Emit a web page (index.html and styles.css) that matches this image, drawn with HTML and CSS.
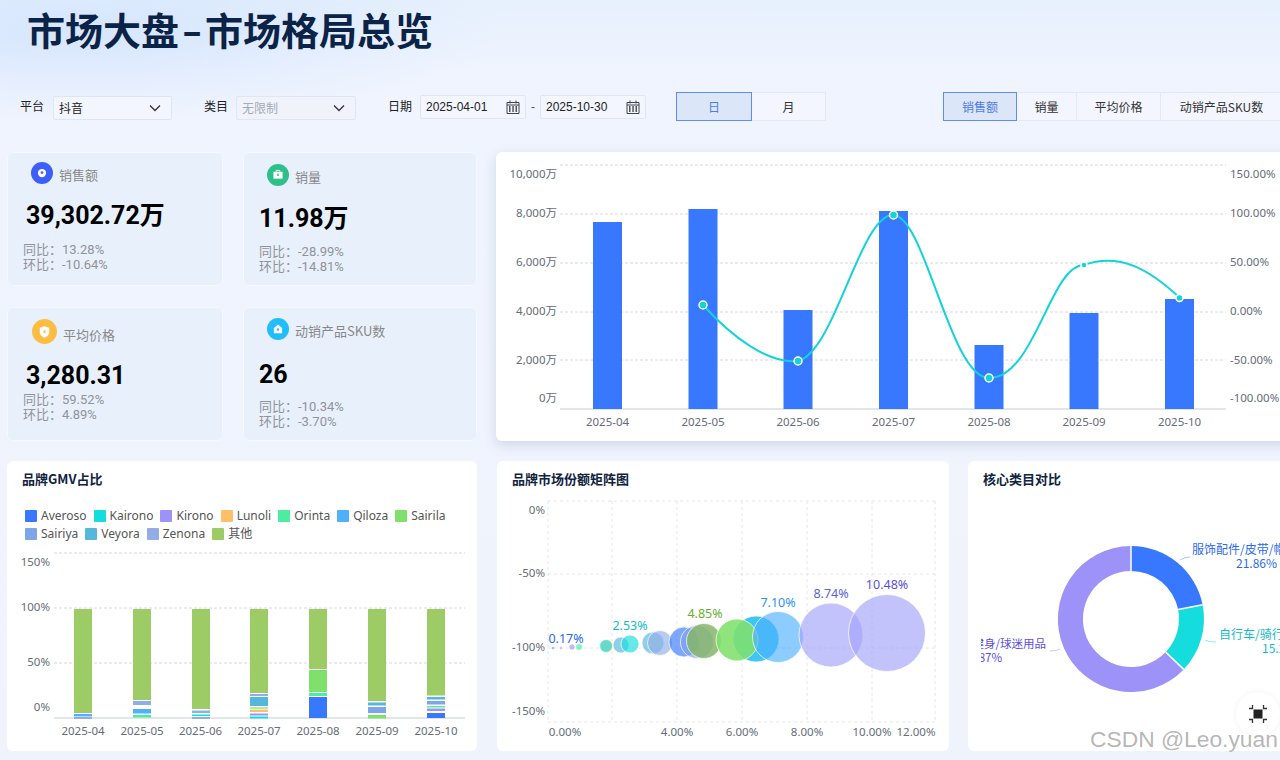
FILE: index.html
```html
<!DOCTYPE html>
<html lang="zh-CN">
<head>
  <meta charset="UTF-8">
  <title>市场大盘-市场格局总览</title>
  <link rel="stylesheet" href="styles.css">
</head>
<body>
  <div class="page">
    <h1 class="page-title">市场大盘<span class="title-dash">-</span>市场格局总览</h1>

    <!-- Filters -->
    <div class="filters">
      <span class="filter-label">平台</span>
      <div class="select">抖音
        <svg class="chevron" viewBox="0 0 12 8"><path d="M1 1.500 6 6.500 11 1.500"/></svg>
      </div>
      <span class="filter-label filter-gap">类目</span>
      <div class="select select-disabled">无限制
        <svg class="chevron" viewBox="0 0 12 8"><path d="M1 1.500 6 6.500 11 1.500"/></svg>
      </div>
      <span class="filter-label filter-gap">日期</span>
      <div class="date-input">2025-04-01
        <svg class="calendar" viewBox="0 0 14 14"><path d="M1 2.500h12v11H1zM1 5h12M4 .5v3M10 .5v3"/><path class="calendar-dots" d="M3 7h1.500M6.300 7h1.500M9.500 7h1.500M3 9h1.500M6.300 9h1.500M9.500 9h1.500M3 11h1.500M6.300 11h1.500M9.500 11h1.500"/></svg>
      </div>
      <span class="date-dash">-</span>
      <div class="date-input">2025-10-30
        <svg class="calendar" viewBox="0 0 14 14"><path d="M1 2.500h12v11H1zM1 5h12M4 .5v3M10 .5v3"/><path class="calendar-dots" d="M3 7h1.500M6.300 7h1.500M9.500 7h1.500M3 9h1.500M6.300 9h1.500M9.500 9h1.500M3 11h1.500M6.300 11h1.500M9.500 11h1.500"/></svg>
      </div>
      <div class="seg seg-period">
        <span class="seg-item active seg-day">日</span>
        <span class="seg-item seg-month">月</span>
      </div>
      <div class="seg seg-metric">
        <span class="seg-item active seg-sales">销售额</span>
        <span class="seg-item seg-volume">销量</span>
        <span class="seg-item seg-price">平均价格</span>
        <span class="seg-item seg-sku">动销产品SKU数</span>
      </div>
    </div>

    <!-- KPI cards and main chart -->
    <div class="top-row">
      <div class="kpi-grid">
        <div class="kpi kpi-sales">
          <div class="kpi-head">
            <svg class="kpi-icon" viewBox="0 0 24 24"><circle cx="12" cy="12" r="12" fill="#3d5efb"/><circle cx="12" cy="12" r="4.500" fill="#fff"/><circle cx="12" cy="11.500" r="1.500" fill="#3d5efb"/></svg>
            <span class="kpi-name">销售额</span>
          </div>
          <div class="kpi-value">39,302.72万</div>
          <div class="kpi-sub">同比：13.28%</div>
          <div class="kpi-sub">环比：-10.64%</div>
        </div>
        <div class="kpi kpi-volume">
          <div class="kpi-head">
            <svg class="kpi-icon" viewBox="0 0 24 24"><circle cx="12" cy="12" r="12" fill="#2fbf8a"/><path d="M7 8.500h10v7.500H7z" fill="#fff"/><path d="M10 8.500V7h4v1.500" fill="none" stroke="#fff"/><rect x="11.200" y="10.500" width="1.600" height="2.500" fill="#2fbf8a"/></svg>
            <span class="kpi-name">销量</span>
          </div>
          <div class="kpi-value">11.98万</div>
          <div class="kpi-sub">同比：-28.99%</div>
          <div class="kpi-sub">环比：-14.81%</div>
        </div>
        <div class="kpi kpi-price">
          <div class="kpi-head">
            <svg class="kpi-icon" viewBox="0 0 24 24"><circle cx="12" cy="12" r="12" fill="#fdbd42"/><path d="M7.500 8.500 12 7l4.500 1.500V13c0 2.500-2.200 4-4.500 5-2.300-1-4.500-2.500-4.500-5z" fill="#fff"/><path d="M10.500 12.500h3M12.500 10.500l-1 3" stroke="#fdbd42" fill="none"/></svg>
            <span class="kpi-name">平均价格</span>
          </div>
          <div class="kpi-value">3,280.31</div>
          <div class="kpi-sub">同比：59.52%</div>
          <div class="kpi-sub">环比：4.89%</div>
        </div>
        <div class="kpi kpi-sku">
          <div class="kpi-head">
            <svg class="kpi-icon" viewBox="0 0 24 24"><circle cx="12" cy="12" r="12" fill="#22bdfb"/><path d="M7.500 11 12 7l4.500 4v5.500h-9z" fill="#fff"/><circle cx="12" cy="12.500" r="1.300" fill="#22bdfb"/></svg>
            <span class="kpi-name">动销产品SKU数</span>
          </div>
          <div class="kpi-value">26</div>
          <div class="kpi-sub">同比：-10.34%</div>
          <div class="kpi-sub">环比：-3.70%</div>
        </div>
      </div>

      <div class="card card-main">
        <svg class="chart" width="820" height="289" viewBox="496 152 820 289">
          <g class="grid">
            <path d="M560 165H1226M560 214H1226M560 263H1226M560 312H1226M560 360H1226"/>
          </g>
          <path class="axis" d="M560 409H1226"/>
          <g class="bar-main">
            <rect x="593" y="222" width="29" height="187"/>
            <rect x="688.500" y="209" width="29" height="200"/>
            <rect x="783.500" y="310" width="29" height="99"/>
            <rect x="879" y="211" width="29" height="198"/>
            <rect x="974.500" y="345" width="29" height="64"/>
            <rect x="1069.500" y="313" width="29" height="96"/>
            <rect x="1165" y="299" width="29" height="110"/>
          </g>
          <path class="trend" d="M703 305C732 337 768 364 798 361C835 352 860 215 893 215C925 215 950 378 989 378C1035 378 1050 265 1084 265C1120 252 1150 270 1180 298"/>
          <g class="trend-dot">
            <circle cx="703" cy="305" r="4"/>
            <circle cx="798" cy="361" r="4"/>
            <circle cx="893.500" cy="215" r="4"/>
            <circle cx="989" cy="378" r="4"/>
            <circle cx="1084" cy="265" r="3"/>
            <circle cx="1179.500" cy="298" r="3.500"/>
          </g>
          <g class="tick tick-end">
            <text x="557" y="178">10,000万</text>
            <text x="557" y="217">8,000万</text>
            <text x="557" y="266">6,000万</text>
            <text x="557" y="315">4,000万</text>
            <text x="557" y="364">2,000万</text>
            <text x="557" y="402">0万</text>
          </g>
          <g class="tick">
            <text x="1230" y="178">150.00%</text>
            <text x="1230" y="217">100.00%</text>
            <text x="1230" y="266">50.00%</text>
            <text x="1230" y="315">0.00%</text>
            <text x="1230" y="364">-50.00%</text>
            <text x="1230" y="402">-100.00%</text>
          </g>
          <g class="tick tick-mid">
            <text x="607.500" y="426">2025-04</text>
            <text x="703" y="426">2025-05</text>
            <text x="798" y="426">2025-06</text>
            <text x="893.500" y="426">2025-07</text>
            <text x="989" y="426">2025-08</text>
            <text x="1084" y="426">2025-09</text>
            <text x="1179.500" y="426">2025-10</text>
          </g>
        </svg>
      </div>
    </div>

    <!-- Bottom charts -->
    <div class="bottom-row">
      <div class="card card-share">
        <h2 class="card-title">品牌GMV占比</h2>
        <div class="legend">
          <span class="legend-item"><i class="swatch c-averoso"></i>Averoso</span>
          <span class="legend-item"><i class="swatch c-kairono"></i>Kairono</span>
          <span class="legend-item"><i class="swatch c-kirono"></i>Kirono</span>
          <span class="legend-item"><i class="swatch c-lunoli"></i>Lunoli</span>
          <span class="legend-item"><i class="swatch c-orinta"></i>Orinta</span>
          <span class="legend-item"><i class="swatch c-qiloza"></i>Qiloza</span>
          <span class="legend-item"><i class="swatch c-sairila"></i>Sairila</span>
          <span class="legend-item"><i class="swatch c-sairiya"></i>Sairiya</span>
          <span class="legend-item"><i class="swatch c-veyora"></i>Veyora</span>
          <span class="legend-item"><i class="swatch c-zenona"></i>Zenona</span>
          <span class="legend-item"><i class="swatch c-other"></i>其他</span>
        </div>
        <svg class="chart" width="470" height="208" viewBox="7 543 470 208">
          <g class="grid"><path d="M54 553H465M54 608H465M54 663H465"/></g>
          <path class="axis" d="M54 718H465"/>
          <g class="stack">
            <rect class="f-other" x="74" y="609" width="18" height="104"/>
            <rect class="f-qiloza" x="74" y="714" width="18" height="2"/>
            <rect class="f-zenona" x="74" y="716.500" width="18" height="2.500"/>

            <rect class="f-other" x="133" y="609" width="18" height="91"/>
            <rect class="f-zenona" x="133" y="701" width="18" height="4"/>
            <rect class="f-qiloza" x="133" y="709" width="18" height="4.500"/>
            <rect class="f-orinta" x="133" y="715" width="18" height="2.500"/>

            <rect class="f-other" x="192" y="609" width="18" height="100"/>
            <rect class="f-zenona" x="192" y="710.500" width="18" height="2.500"/>
            <rect class="f-kairono" x="192" y="714.500" width="18" height="1.500"/>
            <rect class="f-zenona" x="192" y="717" width="18" height="2"/>

            <rect class="f-other" x="250" y="609" width="18" height="84"/>
            <rect class="f-zenona" x="250" y="694" width="18" height="2"/>
            <rect class="f-veyora" x="250" y="697" width="18" height="9"/>
            <rect class="f-lime" x="250" y="707" width="18" height="2.500"/>
            <rect class="f-lunoli" x="250" y="710" width="18" height="2"/>
            <rect class="f-kirono" x="250" y="713.500" width="18" height="2"/>
            <rect class="f-kairono" x="250" y="716.500" width="18" height="2"/>

            <rect class="f-other" x="309" y="609" width="18" height="60"/>
            <rect class="f-sairila" x="309" y="670" width="18" height="22"/>
            <rect class="f-orinta" x="309" y="693" width="18" height="3"/>
            <rect class="f-averoso" x="309" y="697" width="18" height="21"/>

            <rect class="f-other" x="368" y="609" width="18" height="92"/>
            <rect class="f-veyora" x="368" y="702.500" width="18" height="3"/>
            <rect class="f-sairiya" x="368" y="707" width="18" height="6"/>
            <rect class="f-sairila" x="368" y="715" width="18" height="3.500"/>

            <rect class="f-other" x="427" y="609" width="18" height="86.500"/>
            <rect class="f-veyora" x="427" y="697" width="18" height="2.500"/>
            <rect class="f-sairiya" x="427" y="701" width="18" height="3.500"/>
            <rect class="f-orinta" x="427" y="706" width="18" height="1.500"/>
            <rect class="f-kirono" x="427" y="708.500" width="18" height="2.500"/>
            <rect class="f-averoso" x="427" y="713" width="18" height="5"/>
          </g>
          <g class="tick tick-end">
            <text x="50" y="566">150%</text>
            <text x="50" y="611">100%</text>
            <text x="50" y="666">50%</text>
            <text x="50" y="711">0%</text>
          </g>
          <g class="tick tick-mid">
            <text x="83" y="735">2025-04</text>
            <text x="142" y="735">2025-05</text>
            <text x="200.500" y="735">2025-06</text>
            <text x="259" y="735">2025-07</text>
            <text x="318" y="735">2025-08</text>
            <text x="377" y="735">2025-09</text>
            <text x="436" y="735">2025-10</text>
          </g>
        </svg>
      </div>

      <div class="card card-matrix">
        <h2 class="card-title">品牌市场份额矩阵图</h2>
        <svg class="chart" width="452" height="256" viewBox="497 495 452 256">
          <g class="grid grid-light">
            <path d="M548 501H935M548 574H935M548 648H935M548 722H935"/>
            <path d="M548 501V722M612 501V722M677 501V722M742 501V722M807 501V722M872 501V722M935 501V722"/>
          </g>
          <g class="bubbles">
            <circle class="f-averoso" cx="553" cy="648" r="1.500"/>
            <circle class="f-kirono" cx="561" cy="648" r="1.500"/>
            <circle class="f-kirono" cx="572" cy="647" r="3"/>
            <circle class="f-orinta" cx="579" cy="647" r="3.500"/>
            <circle class="f-lunoli" cx="607" cy="646" r="6.500"/>
            <circle class="f-kairono" cx="606" cy="646" r="6.500"/>
            <circle class="f-veyora" cx="621" cy="645" r="8"/>
            <circle class="f-kairono" cx="630" cy="644" r="9"/>
            <circle class="f-veyora" cx="653" cy="643" r="11"/>
            <circle class="f-zenona" cx="660" cy="643" r="12.500"/>
            <circle class="f-averoso" cx="684" cy="642" r="15"/>
            <circle class="f-sairiya" cx="697" cy="642" r="16.500"/>
            <circle class="f-olive" cx="704" cy="641" r="17.500"/>
            <circle class="f-cyan" cx="756" cy="639" r="23"/>
            <circle class="f-sairila" cx="737" cy="640" r="21"/>
            <circle class="f-qiloza" cx="778" cy="637" r="25.500"/>
            <circle class="f-periwinkle" cx="831" cy="635" r="32"/>
            <circle class="f-periwinkle" cx="887" cy="633" r="38.500"/>
          </g>
          <g class="tick tick-end">
            <text x="545" y="514">0%</text>
            <text x="545" y="577">-50%</text>
            <text x="545" y="651">-100%</text>
            <text x="545" y="715">-150%</text>
          </g>
          <g class="tick tick-mid">
            <text x="565" y="736">0.00%</text>
            <text x="677" y="736">4.00%</text>
            <text x="742" y="736">6.00%</text>
            <text x="807" y="736">8.00%</text>
            <text x="872" y="736">10.00%</text>
            <text x="916" y="736">12.00%</text>
          </g>
          <g class="bubble-label">
            <text class="t-blue" x="566" y="642.500">0.17%</text>
            <text class="t-teal" x="630" y="630">2.53%</text>
            <text class="t-green" x="705" y="618">4.85%</text>
            <text class="t-sky" x="778" y="606.500">7.10%</text>
            <text class="t-indigo" x="831" y="598">8.74%</text>
            <text class="t-violet" x="887" y="589">10.48%</text>
          </g>
        </svg>
      </div>

      <div class="card card-donut">
        <h2 class="card-title">核心类目对比</h2>
        <svg class="chart" width="332" height="256" viewBox="968 495 332 256">
          <defs><clipPath id="donutClip"><rect x="981" y="495" width="319" height="256"/></clipPath></defs>
          <path class="f-averoso" d="M1131 546A73 73 0 0 1 1202.600 604.700L1178.100 609.600A48 48 0 0 0 1131 571Z"/>
          <path class="f-kairono" d="M1202.600 604.700A73 73 0 0 1 1183.700 669.400L1165.700 652.100A48 48 0 0 0 1178.100 609.600Z"/>
          <path class="f-kirono" d="M1183.700 669.400A73 73 0 1 1 1131 546V571A48 48 0 1 0 1165.700 652.100Z"/>
          <path class="slice-gap" d="M1131 546V571M1202.600 604.700 1178.100 609.600M1183.700 669.400 1165.700 652.100"/>
          <path class="leader l-blue" d="M1180 560Q1185 557 1190 557"/>
          <path class="leader l-teal" d="M1205 640Q1208 642 1216 642"/>
          <path class="leader l-violet" d="M1060 649Q1057 651 1050 651"/>
          <g class="donut-label">
            <text class="t-blue" x="1192" y="553.500">服饰配件/皮带/帽子</text>
            <text class="t-blue" x="1236" y="567.500">21.86%</text>
            <text class="t-teal" x="1219" y="638.500">自行车/骑行装备</text>
            <text class="t-teal" x="1262" y="652.500">15.27%</text>
          </g>
          <g class="donut-label donut-label-end" clip-path="url(#donutClip)">
            <text class="t-violet" x="1046" y="647.500">运动/健身/球迷用品</text>
            <text class="t-violet" x="1002" y="661.500">62.87%</text>
          </g>
        </svg>
      </div>
    </div>

    <!-- Floating button and watermark -->
    <div class="float-btn">
      <svg viewBox="0 0 20 20" width="20" height="20"><rect x="5.500" y="5.500" width="9" height="9"/><path d="M1 4.500h3.500V1M15.500 1v3.500H19M1 15.500h3.500V19M19 15.500h-3.500V19"/></svg>
    </div>
    <div class="watermark">CSDN @Leo.yuan</div>
  </div>
</body>
</html>
```

FILE: styles.css
```css
html, body {
  margin: 0;
  height: 760px;
  overflow: hidden;
}

body {
  font-family: "Noto Sans", "Noto Sans CJK SC", sans-serif;
  color: #333;
}

.page {
  position: relative;
  width: 1280px;
  height: 760px;
  overflow: hidden;
  background:
    radial-gradient(ellipse 420px 90px at 80px 30px, #d6e6fd 0%, rgba(214, 230, 253, 0) 100%),
    linear-gradient(180deg, #e6f0fd 0%, #eff4fe 70px, #eff3fc 100%);
}

/* Title */
.page-title {
  margin: 0;
  height: 62px;
  padding-left: 27px;
  font-family: "Noto Sans CJK SC", sans-serif;
  font-size: 38px;
  font-weight: 700;
  line-height: 58px;
  color: #0b2347;
}

.title-dash {
  display: inline-block;
  width: 26px;
  text-align: center;
  transform: scaleX(1.500);
}

/* Filter bar */
.filters {
  display: flex;
  align-items: center;
  height: 30px;
  margin-top: 30px;
  padding-left: 20px;
  font-size: 12px;
  font-family: "Liberation Sans", "Noto Sans CJK SC", sans-serif;
  white-space: nowrap;
}

.filter-label {
  width: 33px;
  flex: none;
  margin-top: -3px;
  color: #222;
  font-family: "Noto Sans CJK SC", sans-serif;
}

.filter-gap {
  margin-left: 32px;
  width: 32px;
}

.select, .date-input {
  display: flex;
  align-items: center;
  justify-content: space-between;
  box-sizing: border-box;
  height: 24px;
  flex: none;
  padding: 0 5px;
  margin-top: 1px;
  border: 1px solid #dfe6f3;
  border-radius: 2px;
  background: #f3f6fe;
  color: #222;
}

.select {
  width: 119px;
  font-family: "Noto Sans CJK SC", sans-serif;
}

.select-disabled {
  width: 120px;
  color: #a3abb8;
  background: #f0f3fa;
}

.chevron {
  width: 12px;
  height: 8px;
  margin-right: 5px;
  fill: none;
  stroke: #333;
  stroke-width: 1.300;
}

.date-input {
  width: 106px;
  margin-top: 0;
}

.calendar {
  width: 14px;
  height: 14px;
  fill: none;
  stroke: #3c4250;
  stroke-width: 1;
}

.calendar-dots {
  stroke: #222;
  stroke-width: 1.300;
}

.date-dash {
  width: 14px;
  flex: none;
  text-align: center;
  color: #555;
}

.seg {
  display: flex;
  height: 29px;
  flex: none;
  margin-top: -1px;
  font-family: "Noto Sans CJK SC", sans-serif;
}

.seg-period {
  margin-left: 30px;
}

.seg-metric {
  margin-left: 117px;
}

.seg-item {
  display: flex;
  align-items: center;
  justify-content: center;
  box-sizing: border-box;
  border: 1px solid #e2e8f4;
  border-left: 0;
  background: #f3f6fe;
  color: #333;
}

.seg-item.active {
  border: 1px solid #5f8cf0;
  background: #dbe6f8;
  color: #4f7bea;
}

.seg-day { width: 76px; }
.seg-month { width: 74px; }
.seg-sales { width: 74px; }
.seg-volume { width: 60px; }
.seg-price { width: 84px; }
.seg-sku { width: 122px; }

/* KPI cards */
.top-row {
  display: flex;
  margin-top: 30px;
  padding-left: 7px;
}

.kpi-grid {
  display: grid;
  grid-template-columns: 216px 234px;
  grid-template-rows: 134px 134px;
  gap: 21px 20px;
  flex: none;
}

.kpi {
  box-sizing: border-box;
  border: 1px solid #f4f8ff;
  border-radius: 6px;
  background: #e8f0fc;
  padding-left: 15px;
}

.kpi-head {
  display: flex;
  align-items: center;
  color: #888;
  font-size: 13px;
  font-family: "Noto Sans CJK SC", sans-serif;
}

.kpi-icon {
  width: 22px;
  height: 22px;
  flex: none;
}

.kpi-name {
  margin-left: 6px;
  margin-top: 5px;
  line-height: 18px;
}

.kpi-value {
  font-family: "Roboto", "Noto Sans CJK SC", sans-serif;
  font-size: 25px;
  font-weight: 700;
  line-height: 32px;
  color: #000;
  margin-left: 3px;
}

.kpi-sub {
  font-family: "Roboto", "Noto Sans CJK SC", sans-serif;
  font-size: 13px;
  line-height: 15px;
  color: #909399;
}

.kpi-sales { padding-top: 8px; }
.kpi-sales .kpi-head { margin-left: 8px; }
.kpi-sales .kpi-value { margin-top: 16px; margin-bottom: 10px; }

.kpi-volume { padding-top: 10px; }
.kpi-volume .kpi-head { margin-left: 8px; }
.kpi-volume .kpi-value { margin-top: 17px; margin-bottom: 9px; margin-left: 0; }

.kpi-price { padding-top: 11px; }
.kpi-price .kpi-icon { width: 25px; height: 25px; }
.kpi-price .kpi-name { margin-top: 7px; }
.kpi-price .kpi-head { margin-left: 9px; }
.kpi-price .kpi-value { margin-top: 16px; margin-bottom: 0; }

.kpi-sku { padding-top: 10px; }
.kpi-sku .kpi-head { margin-left: 8px; }
.kpi-sku .kpi-name { margin-top: 3px; }
.kpi-sku .kpi-value { margin-top: 19px; margin-bottom: 8px; margin-left: 0; }

/* Cards and charts */
.card {
  flex: none;
  background: #fff;
  border-radius: 6px;
}

.card-main {
  width: 820px;
  height: 289px;
  margin-left: 19px;
  border-radius: 6px 0 0 6px;
  box-shadow: 0 4px 12px rgba(100, 120, 160, 0.22);
}

.bottom-row {
  display: flex;
  margin-top: 20px;
  padding-left: 7px;
}

.card-share { width: 470px; height: 290px; }
.card-matrix { width: 452px; height: 290px; margin-left: 20px; }
.card-donut { width: 332px; height: 290px; margin-left: 19px; }

.card-title {
  margin: 0;
  padding: 9px 0 0 15px;
  height: 25px;
  font-family: "Noto Sans CJK SC", sans-serif;
  font-size: 13px;
  font-weight: 700;
  line-height: 18px;
  color: #10233f;
}

.legend {
  display: flex;
  flex-wrap: wrap;
  gap: 0 7px;
  height: 36px;
  margin: 12px 0 0 18px;
  font-size: 12px;
  line-height: 18px;
  color: #555;
}

.legend-item {
  display: flex;
  align-items: center;
  gap: 4px;
}

.swatch {
  display: block;
  width: 12px;
  height: 12px;
  border-radius: 1px;
}

.c-averoso { background: #3778fe; }
.c-kairono { background: #16dddd; }
.c-kirono { background: #9c92f8; }
.c-lunoli { background: #ffbf69; }
.c-orinta { background: #4eec9e; }
.c-qiloza { background: #4eb0ff; }
.c-sairila { background: #7fe06c; }
.c-sairiya { background: #7ea4ea; }
.c-veyora { background: #55b7da; }
.c-zenona { background: #92ade6; }
.c-other { background: #9dcc66; }

.chart {
  display: block;
}

.grid path {
  fill: none;
  stroke: #d5d8de;
  stroke-dasharray: 3 2;
}

.grid-light path {
  stroke: #e3e6ec;
  stroke-dasharray: 3 3;
}

.axis {
  fill: none;
  stroke: #d9dce3;
  stroke-width: 1.500;
}

.tick text {
  font-size: 11.500px;
  fill: #666c78;
}

.tick-end text { text-anchor: end; }
.tick-mid text { text-anchor: middle; }

.bar-main rect {
  fill: #3778fe;
}

.trend {
  fill: none;
  stroke: #12d4d8;
  stroke-width: 2;
}

.trend-dot circle {
  fill: #12d4d8;
  stroke: #fff;
  stroke-width: 1.500;
}

.f-averoso { fill: #3778fe; }
.f-kairono { fill: #16dddd; }
.f-kirono { fill: #9c92f8; }
.f-lunoli { fill: #ffbf69; }
.f-orinta { fill: #4eec9e; }
.f-qiloza { fill: #4eb0ff; }
.f-sairila { fill: #7fe06c; }
.f-sairiya { fill: #7ea4ea; }
.f-veyora { fill: #55b7da; }
.f-zenona { fill: #92ade6; }
.f-other { fill: #9dcc66; }
.f-lime { fill: #b9e89a; }
.f-cyan { fill: #0fb6ee; }
.f-olive { fill: #86b56a; }
.f-periwinkle { fill: #a3a3fa; }

.bubbles circle {
  fill-opacity: 0.65;
  stroke: #fff;
  stroke-opacity: 0.7;
}

.bubbles .f-olive { fill-opacity: 0.85; }
.bubbles .f-cyan { fill-opacity: 0.8; }
.bubbles .f-sairila { fill-opacity: 0.88; }

.bubble-label text {
  font-size: 12.500px;
  text-anchor: middle;
}

.t-blue { fill: #2a6af0; }
.t-teal { fill: #12bcc4; }
.t-green { fill: #6aad2f; }
.t-sky { fill: #2a94f0; }
.t-indigo { fill: #5b63e0; }
.t-violet { fill: #5a4fe0; }

.slice-gap {
  fill: none;
  stroke: #fff;
  stroke-width: 1.500;
}

.leader {
  fill: none;
  stroke-width: 1;
}

.l-blue { stroke: #a9c5fb; }
.l-teal { stroke: #8deded; }
.l-violet { stroke: #cdc8fb; }

.donut-label text {
  font-family: "Noto Sans CJK SC", sans-serif;
  font-size: 12px;
}

.donut-label-end text {
  font-size: 11.500px;
  text-anchor: end;
}

/* Overlays */
.float-btn {
  position: absolute;
  left: 1236px;
  top: 692px;
  display: flex;
  align-items: center;
  justify-content: center;
  width: 44px;
  height: 44px;
  border-radius: 50%;
  background: #fff;
  box-shadow: 0 0 6px rgba(0, 0, 0, 0.06);
}

.float-btn rect {
  fill: #222;
}

.float-btn path {
  fill: none;
  stroke: #333;
  stroke-width: 1.300;
}

.watermark {
  position: absolute;
  left: 1090px;
  top: 725px;
  font-family: "Liberation Sans", sans-serif;
  font-size: 22.800px;
  line-height: 28px;
  white-space: nowrap;
  color: rgba(120, 120, 120, 0.55);
  text-shadow: 0 0 2px rgba(255, 255, 255, 0.9);
}
```
